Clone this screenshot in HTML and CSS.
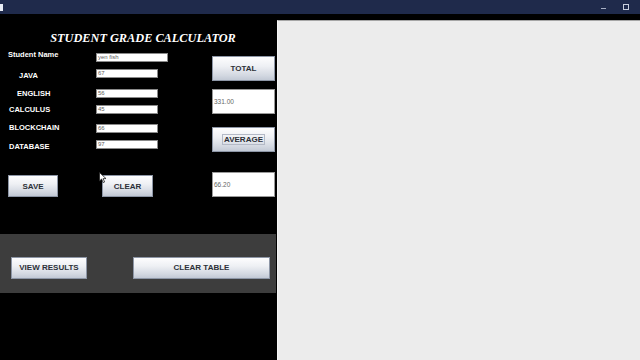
FILE: index.html
```html
<!DOCTYPE html>
<html>
<head>
<meta charset="utf-8">
<link rel="stylesheet" href="styles.css">
</head>
<body>
<div class="titlebar">
  <span class="app-icon"></span>
  <span class="spacer"></span>
  <span class="win-min"></span>
  <span class="win-max"></span>
</div>
<div class="app">
  <div class="left">
    <h1 class="title">STUDENT GRADE CALCULATOR</h1>
    <div class="form">
      <div class="fields">
        <div class="row r1"><span class="label l1">Student Name</span><span class="input wide">yen fish</span></div>
        <div class="row r2"><span class="label l2">JAVA</span><span class="input">67</span></div>
        <div class="row r3"><span class="label l3">ENGLISH</span><span class="input">56</span></div>
        <div class="row r4"><span class="label l4">CALCULUS</span><span class="input">45</span></div>
        <div class="row r5"><span class="label l5">BLOCKCHAIN</span><span class="input">66</span></div>
        <div class="row r6"><span class="label l6">DATABASE</span><span class="input">97</span></div>
        <div class="actions">
          <button class="btn btn-save">SAVE</button>
          <button class="btn btn-clear">CLEAR</button>
        </div>
      </div>
      <div class="side">
        <button class="btn btn-side">TOTAL</button>
        <div class="result res1">331.00</div>
        <button class="btn btn-side btn-avg"><span class="focus">AVERAGE</span></button>
        <div class="result res2">66.20</div>
      </div>
    </div>
    <div class="band">
      <button class="btn btn-view">VIEW RESULTS</button>
      <button class="btn btn-table">CLEAR TABLE</button>
    </div>
    <svg class="cursor" width="8" height="12" viewBox="0 0 8 12"><path d="M0.5 0.5 L0.5 9 L2.6 7 L4.2 10.6 L5.6 10 L4.1 6.6 L7 6.6 Z" fill="#fff" stroke="#222" stroke-width="0.8"/></svg>
  </div>
  <div class="right"></div>
</div>
</body>
</html>
```
FILE: styles.css
```css
html, body {
  margin: 0;
  padding: 0;
}
body {
  width: 640px;
  height: 360px;
  background: #000;
  overflow: hidden;
  font-family: "Liberation Sans", Arial, sans-serif;
}
.titlebar {
  height: 14px;
  background: #1f2a4b;
  display: flex;
  align-items: center;
}
.app-icon {
  width: 3px;
  height: 7px;
  background: #e8ecf4;
  margin-top: 1px;
}
.spacer { flex: 1; }
.win-min {
  width: 5px;
  height: 1px;
  background: #a8b0c4;
  margin-right: 17px;
  margin-top: 2px;
}
.win-max {
  width: 4px;
  height: 4px;
  border: 1px solid #c8cedc;
  margin-right: 11px;
}
.app {
  display: flex;
  height: 346px;
}
.left {
  width: 277px;
  background: #000;
  padding-top: 16px;
  box-sizing: border-box;
  position: relative;
}
.title {
  margin: 0;
  font-family: "Liberation Serif", "Times New Roman", serif;
  font-style: italic;
  font-weight: bold;
  font-size: 12.3px;
  line-height: 16px;
  color: #fff;
  text-align: center;
  padding-left: 9px;
}
.form {
  display: flex;
  margin-top: 7px;
}
.fields {
  width: 212px;
  display: flex;
  flex-direction: column;
}
.row {
  display: flex;
  align-items: flex-start;
  height: 9px;
}
.r1 { margin-top: 0; }
.r2 { margin-top: 7px; }
.r3 { margin-top: 11px; }
.r4 { margin-top: 7px; }
.r5 { margin-top: 10px; }
.r6 { margin-top: 7px; }
.label {
  width: 96px;
  box-sizing: border-box;
  font-weight: bold;
  font-size: 7.5px;
  line-height: 10px;
  color: #fff;
  white-space: nowrap;
}
.l1 { padding-left: 8px; margin-top: -3px; }
.l2 { padding-left: 19px; margin-top: 1.5px; }
.l3 { padding-left: 17px; margin-top: 0; }
.l4 { padding-left: 9px; margin-top: -0.5px; }
.l5 { padding-left: 9px; margin-top: -1px; }
.l6 { padding-left: 9px; margin-top: 2px; }
.input {
  width: 62px;
  height: 9px;
  box-sizing: border-box;
  background: #fff;
  border: 1px solid #8a8a8a;
  font-size: 6px;
  line-height: 7px;
  color: #606060;
  padding-left: 1px;
}
.input.wide { width: 72px; }
.btn {
  font-family: "Liberation Sans", Arial, sans-serif;
  font-weight: bold;
  font-size: 8px;
  color: #2c3038;
  border: 1px solid #8d96a6;
  background: linear-gradient(#fdfdfe 0%, #eef0f4 40%, #d3d8e1 80%, #c2c9d5 100%);
  padding: 0;
  margin: 0;
  box-sizing: border-box;
  display: flex;
  align-items: center;
  justify-content: center;
}
.actions {
  display: flex;
  margin-top: 26px;
}
.btn-save {
  width: 50px;
  height: 22px;
  margin-left: 8px;
}
.btn-clear {
  width: 51px;
  height: 22px;
  margin-left: 44px;
}
.side {
  width: 63px;
  margin-top: 3px;
  display: flex;
  flex-direction: column;
}
.btn-side {
  width: 63px;
  height: 25px;
}
.focus {
  border: 1px solid #b3b9c6;
  padding: 0 1px;
  line-height: 9px;
}
.result {
  width: 63px;
  height: 25px;
  box-sizing: border-box;
  background: #fff;
  border: 1px solid #9a9a9a;
  font-size: 6.5px;
  color: #666;
  display: flex;
  align-items: center;
  padding-left: 1px;
}
.res1 { margin-top: 8px; }
.btn-avg { margin-top: 13px; }
.res2 { margin-top: 20px; }
.band {
  margin-top: 37px;
  width: 276px;
  height: 59px;
  background: #3d3d3d;
  display: flex;
  align-items: center;
  padding-top: 8px;
  box-sizing: border-box;
}
.btn-view {
  width: 76px;
  height: 22px;
  margin-left: 11px;
}
.btn-table {
  width: 137px;
  height: 22px;
  margin-left: 46px;
}
.cursor {
  position: absolute;
  left: 99px;
  top: 158px;
}
.right {
  flex: 1;
  margin-top: 6px;
  background: #ececec;
  border-top: 1px solid #a6a6a6;
  border-left: 1px solid #f6f6f6;
}
```
